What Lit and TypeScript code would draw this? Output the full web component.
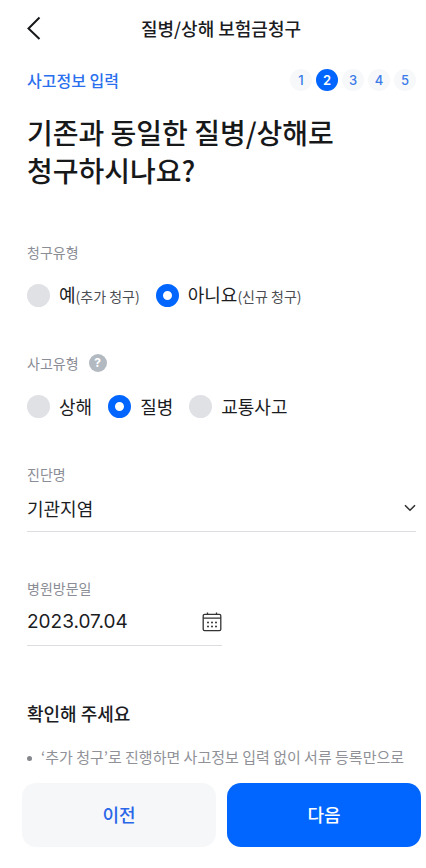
import { LitElement, html, css, svg } from "lit";
import { customElement, state } from "lit/decorators.js";
import { classMap } from "lit/directives/class-map.js";

interface Choice {
  value: string;
  label: string;
  note?: string;
}

const CLAIM_TYPES: Choice[] = [
  { value: "additional", label: "예", note: "(추가 청구)" },
  { value: "new", label: "아니요", note: "(신규 청구)" },
];

const ACCIDENT_TYPES: Choice[] = [
  { value: "injury", label: "상해" },
  { value: "disease", label: "질병" },
  { value: "traffic", label: "교통사고" },
];

const STEPS = [1, 2, 3, 4, 5];

@customElement("app-root")
export class AppRoot extends LitElement {
  @state() private claimType = "new";
  @state() private accidentType = "disease";
  @state() private step = 2;

  static styles = css`
    :host {
      display: flex;
      flex-direction: column;
      height: 100vh;
      box-sizing: border-box;
      padding-left: 16px;
      background: #fff;
      color: #1b1c1f;
      font-family: "Noto Sans CJK KR", "Noto Sans", sans-serif;
      font-size: 18px;
      line-height: 24px;
    }
    *,
    *::before {
      box-sizing: border-box;
    }
    h1,
    h2,
    h3,
    ul,
    ol,
    fieldset {
      margin: 0;
      padding: 0;
      border: 0;
      min-width: 0;
    }
    button,
    input,
    select {
      font: inherit;
      color: inherit;
      margin: 0;
      padding: 0;
      border: 0;
      background: none;
      border-radius: 0;
    }
    button {
      cursor: pointer;
    }
    svg {
      display: block;
    }
    .header {
      flex: none;
      display: grid;
      grid-template-columns: 36px 1fr 36px;
      align-items: center;
      height: 56px;
    }
    .back {
      display: flex;
      align-items: center;
      justify-content: center;
      height: 36px;
    }
    .header-title {
      font-size: 18px;
      font-weight: 500;
      text-align: center;
    }
    .content {
      flex: 1;
      min-height: 0;
      overflow-y: auto;
      scrollbar-width: none;
      padding: 12px 10px 0 11px;
    }
    .progress {
      display: flex;
      align-items: center;
      justify-content: space-between;
      height: 24px;
    }
    .progress-label {
      font-size: 16px;
      font-weight: 500;
      color: #2a70ee;
    }
    .steps {
      display: flex;
      gap: 4px;
      list-style: none;
    }
    .step {
      width: 22px;
      height: 22px;
      border-radius: 50%;
      background: #f7f8f9;
      color: #3b7bea;
      font-family: Inter, sans-serif;
      font-size: 13px;
      font-weight: 500;
      line-height: 22px;
      text-align: center;
    }
    .step.current {
      background: #0066ff;
      color: #fff;
      font-weight: 600;
    }
    .question {
      margin-top: 21px;
      font-size: 28px;
      font-weight: 500;
      line-height: 38px;
      color: #17181a;
    }
    .form {
      display: flex;
      flex-direction: column;
      gap: 46px;
      margin-top: 53px;
    }
    .label {
      display: flex;
      align-items: center;
      gap: 10px;
      height: 20px;
      padding: 0;
      font-size: 14px;
      line-height: 20px;
      color: #8b8d96;
    }
    .help {
      width: 18px;
      height: 18px;
      border-radius: 50%;
      background: #b3b9c1;
      color: #fff;
      font-family: Inter, sans-serif;
      font-size: 12px;
      font-weight: 700;
      line-height: 18px;
      text-align: center;
    }
    .choices {
      display: flex;
      gap: 16px;
      margin-top: 21px;
    }
    .choice {
      display: flex;
      align-items: center;
      gap: 9px;
      height: 24px;
      white-space: nowrap;
      cursor: pointer;
    }
    .note {
      font-size: 14px;
      color: #4c4d52;
    }
    .radio {
      appearance: none;
      width: 23px;
      height: 23px;
      border-radius: 50%;
      background: #e0e1e5;
    }
    .radio:checked {
      border: 7px solid #0066ff;
      background: #fff;
    }
    .control {
      display: flex;
      align-items: center;
      height: 48px;
      border-bottom: 1px solid #dcdde0;
    }
    .select-wrap {
      display: grid;
      align-items: center;
    }
    .select-wrap > * {
      grid-area: 1 / 1;
    }
    .select {
      appearance: none;
      width: 100%;
      height: 47px;
      cursor: pointer;
    }
    .chevron {
      justify-self: end;
      pointer-events: none;
    }
    .half {
      width: 50%;
    }
    .date {
      flex: 1;
      min-width: 0;
      height: 47px;
      font-family: Inter, sans-serif;
      font-size: 19px;
    }
    .notice {
      margin-top: 55px;
    }
    .notice-title {
      font-size: 18px;
      font-weight: 500;
      line-height: 24px;
    }
    .notice-list {
      margin-top: 21px;
      list-style: none;
      font-size: 15px;
      line-height: 22px;
      color: #8f9197;
    }
    .notice-item {
      display: flex;
      gap: 9px;
    }
    .notice-item::before {
      content: "";
      flex: none;
      width: 5px;
      height: 5px;
      margin-top: 10px;
      border-radius: 50%;
      background: #85878d;
    }
    .footer {
      flex: none;
      display: grid;
      grid-template-columns: 1fr 1fr;
      gap: 11px;
      padding: 17px 5px 21px 6px;
      background: #fff;
    }
    .action {
      height: 64px;
      padding-bottom: 2px;
      border-radius: 14px;
      font-weight: 500;
      background: #f6f7f9;
      color: #2a66e8;
    }
    .action.primary {
      background: #0066ff;
      color: #fff;
    }
  `;

  private renderChoices(name: string, choices: Choice[], selected: string, pick: (v: string) => void) {
    return html`<div class="choices">
      ${choices.map(
        (c) => html`<label class="choice">
          <input
            class="radio"
            type="radio"
            name=${name}
            .value=${c.value}
            .checked=${c.value === selected}
            @change=${() => pick(c.value)}
          />
          <span>${c.label}${c.note ? html`<span class="note">${c.note}</span>` : null}</span>
        </label>`
      )}
    </div>`;
  }

  private renderCalendar() {
    const dots = [6, 10, 14].flatMap((x) =>
      [10.5, 14.5].map((y) => svg`<rect x=${x - 1} y=${y - 0.8} width="2" height="1.6" />`)
    );
    return html`<svg width="20" height="20" viewBox="0 0 20 20" fill="#444" aria-hidden="true">
      <rect x="1.2" y="2.4" width="17.6" height="16.2" rx="1.4" fill="none" stroke="#333" stroke-width="1.3" />
      <path d="M1.2 6.2H18.8M5.5 0.4V3M14.5 0.4V3" fill="none" stroke="#333" stroke-width="1.3" />
      ${dots}
    </svg>`;
  }

  render() {
    return html`
      <header class="header">
        <button class="back" aria-label="뒤로">
          <svg width="16" height="24" viewBox="0 0 16 24" fill="none" stroke="#17181a" stroke-width="2" aria-hidden="true">
            <path d="M13.5 1.5L2.5 12.5L13.5 23" />
          </svg>
        </button>
        <h1 class="header-title">질병/상해 보험금청구</h1>
      </header>

      <main class="content">
        <div class="progress">
          <span class="progress-label">사고정보 입력</span>
          <ol class="steps">
            ${STEPS.map((n) => html`<li class=${classMap({ step: true, current: n === this.step })}>${n}</li>`)}
          </ol>
        </div>
        <h2 class="question">기존과 동일한 질병/상해로<br />청구하시나요?</h2>

        <form class="form">
          <fieldset>
            <legend class="label">청구유형</legend>
            ${this.renderChoices("claim", CLAIM_TYPES, this.claimType, (v) => (this.claimType = v))}
          </fieldset>
          <fieldset>
            <legend class="label">
              사고유형
              <button class="help" type="button">?</button>
            </legend>
            ${this.renderChoices("accident", ACCIDENT_TYPES, this.accidentType, (v) => (this.accidentType = v))}
          </fieldset>
          <div>
            <label class="label" for="diagnosis">진단명</label>
            <div class="control select-wrap">
              <select class="select" id="diagnosis">
                <option selected>기관지염</option>
              </select>
              <svg class="chevron" width="12" height="8" viewBox="0 0 12 8" fill="none" stroke="#333" stroke-width="1.6" aria-hidden="true">
                <path d="M1 1.2L6 6.2L11 1.2" />
              </svg>
            </div>
          </div>
          <div class="half">
            <label class="label" for="visit">병원방문일</label>
            <div class="control">
              <input class="date" id="visit" type="text" value="2023.07.04" />
              <button type="button" aria-label="날짜 선택">${this.renderCalendar()}</button>
            </div>
          </div>
        </form>

        <section class="notice">
          <h3 class="notice-title">확인해 주세요</h3>
          <ul class="notice-list">
            <li class="notice-item">‘추가 청구’로 진행하면 사고정보 입력 없이 서류 등록만으로</li>
          </ul>
        </section>
      </main>

      <footer class="footer">
        <button class="action">이전</button>
        <button class="action primary">다음</button>
      </footer>
    `;
  }
}
